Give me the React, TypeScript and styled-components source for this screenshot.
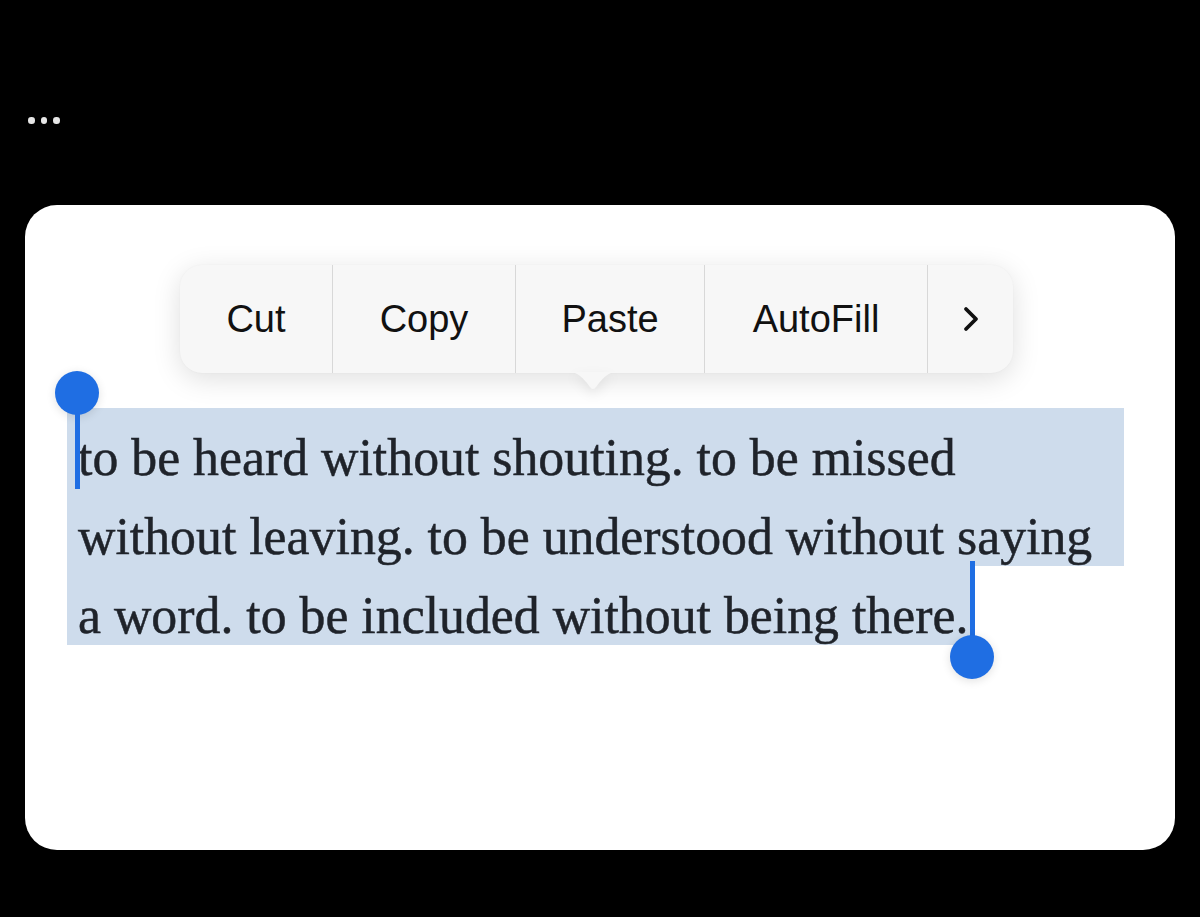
import React from 'react'
import styled, { createGlobalStyle } from 'styled-components'

const GlobalStyle = createGlobalStyle`
    html, body {
        margin: 0;
        background: #000;
    }
`

const Screen = styled.div`
    width: 1200px;
    height: 917px;
    background: #000;
    overflow: hidden;
`

const TopBar = styled.div`
    height: 205px;
    box-sizing: border-box;
    padding: 117px 0 0 28px;
    display: flex;
    gap: 6px;
`

const Dot = styled.span`
    width: 6.5px;
    height: 6.5px;
    border-radius: 50%;
    background: #e6e6e6;
`

const Card = styled.div`
    margin: 0 25px;
    height: 645px;
    box-sizing: border-box;
    padding-top: 60px;
    background: #fff;
    border-radius: 32px;
`

const Menu = styled.div`
    position: relative;
    margin-left: 155px;
    display: inline-flex;
    height: 108px;
    background: #f7f7f7;
    border-radius: 22px;
    box-shadow: 0 6px 28px rgba(0, 0, 0, 0.13), 0 0 2px rgba(0, 0, 0, 0.04);
`

const MenuItem = styled.div<{ $w: number }>`
    width: ${p => p.$w}px;
    box-sizing: border-box;
    display: flex;
    align-items: center;
    justify-content: center;
    font-family: "Liberation Sans", Arial, sans-serif;
    font-size: 38px;
    color: #111;

    & + & {
        border-left: 1px solid #d8d8d8;
    }
`

const Tail = styled.svg`
    position: absolute;
    left: 389px;
    bottom: -19px;
    filter: drop-shadow(0 5px 6px rgba(0, 0, 0, 0.08));
`

const Selection = styled.div`
    position: relative;
    margin: 35px 0 0 42px;
    width: 1057px;
`

const Line = styled.div<{ $last?: boolean }>`
    height: 79px;
    box-sizing: border-box;
    padding: 20px ${p => (p.$last ? '5px' : '0')} 0 11px;
    width: ${p => (p.$last ? 'fit-content' : 'auto')};
    background: #cedcec;
    font-family: "Liberation Serif", "Times New Roman", serif;
    font-size: 51.8px;
    line-height: 59px;
    color: #1f232a;
    -webkit-text-stroke: 0.5px #1f232a;
    white-space: nowrap;
`

const Handle = styled.div<{ $end?: boolean }>`
    position: absolute;
    left: ${p => (p.$end ? '883px' : '-12px')};
    top: ${p => (p.$end ? '155px' : '-37px')};
    width: 44px;
    display: flex;
    flex-direction: ${p => (p.$end ? 'column-reverse' : 'column')};
    align-items: center;
`

const Knob = styled.div`
    width: 44px;
    height: 44px;
    border-radius: 50%;
    background: #1f6ee3;
    box-shadow: 0 2px 10px rgba(0, 0, 0, 0.12);
`

const Stem = styled.div`
    width: 5px;
    height: 76px;
    margin: -2px 0;
    background: #1f6ee3;
`

const items = [
    { label: 'Cut', w: 152 },
    { label: 'Copy', w: 183 },
    { label: 'Paste', w: 189 },
    { label: 'AutoFill', w: 223 },
]

const App = () => {
  return (
    <Screen>
        <GlobalStyle />
        <TopBar>
            <Dot />
            <Dot />
            <Dot />
        </TopBar>

        <Card>
            <Menu>
                {items.map(item => (
                    <MenuItem key={item.label} $w={item.w}>
                        {item.label}
                    </MenuItem>
                ))}
                <MenuItem $w={86}>
                    <svg width="20" height="28" viewBox="0 0 20 28">
                        <path d="M5 4 L15 14 L5 24" fill="none" stroke="#111" strokeWidth="3.8" strokeLinecap="round" strokeLinejoin="round" />
                    </svg>
                </MenuItem>

                <Tail width="48" height="20" viewBox="0 0 48 20">
                    <path d="M0 0 L48 0 C40 0 36 4 30 11 L27 15 Q24 19 21 15 L18 11 C12 4 8 0 0 0 Z" fill="#f7f7f7" />
                </Tail>
            </Menu>

            <Selection>
                <Line>to be heard without shouting. to be missed</Line>
                <Line>without leaving. to be understood without saying</Line>
                <Line $last>a word. to be included without being there.</Line>

                <Handle>
                    <Knob />
                    <Stem />
                </Handle>
                <Handle $end>
                    <Knob />
                    <Stem />
                </Handle>
            </Selection>
        </Card>
    </Screen>
  )
}

export default App
